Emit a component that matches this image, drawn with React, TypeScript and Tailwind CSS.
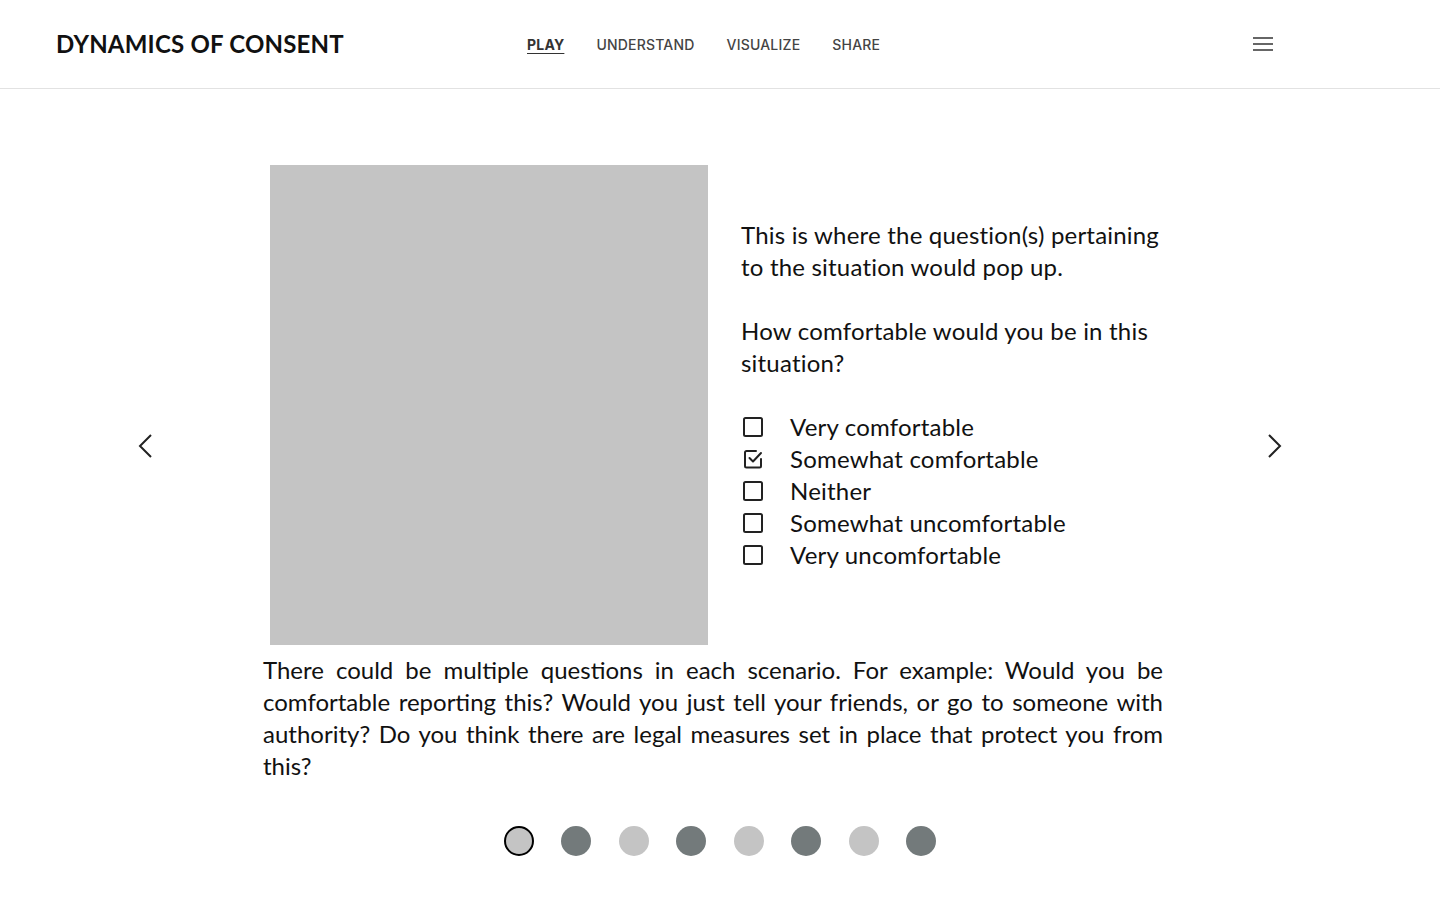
import React from "react";

const Box = ({ checked }: { checked?: boolean }) =>
  checked ? (
    <svg width="24" height="24" viewBox="0 0 24 24" fill="none" stroke="#222" strokeWidth="2" strokeLinecap="round" strokeLinejoin="round">
      <path d="M20 12v7a1.5 1.5 0 0 1-1.5 1.5h-13A1.5 1.5 0 0 1 4 19V5.5A1.5 1.5 0 0 1 5.5 4H15" />
      <path d="M8.5 11l3.5 3.5 8-8.5" />
    </svg>
  ) : (
    <svg width="24" height="24" viewBox="0 0 24 24" fill="none" stroke="#222" strokeWidth="2">
      <rect x="3" y="3" width="18" height="18" rx="1.5" />
    </svg>
  );

export default function App() {
  const options = [
    "Very comfortable",
    "Somewhat comfortable",
    "Neither",
    "Somewhat uncomfortable",
    "Very uncomfortable",
  ];
  const dots = ["a", "d", "l", "d", "l", "d", "l", "d"];
  return (
    <div className="min-h-[900px] bg-white text-[#111]" style={{ fontFamily: "Lato, 'Open Sans', sans-serif" }}>
      <header className="h-[89px] border-b border-[#e2e2e2] flex items-center pl-[56px] pr-[167px]">
        <div className="w-[471px] shrink-0 text-[24px] font-bold tracking-[0.2px] text-[#111]">DYNAMICS OF CONSENT</div>
        <nav className="flex gap-8 text-[14px] text-[#444] font-medium tracking-[0.2px]" style={{ fontFamily: "Inter, sans-serif" }}>
          <a className="font-bold text-[#333] underline underline-offset-[3px]">PLAY</a>
          <a>UNDERSTAND</a>
          <a>VISUALIZE</a>
          <a>SHARE</a>
        </nav>
        <div className="flex-1" />
        <svg width="20" height="16" viewBox="0 0 20 16">
          <rect x="0" y="1" width="20" height="2" fill="#666" />
          <rect x="0" y="7" width="20" height="2" fill="#666" />
          <rect x="0" y="13" width="20" height="2" fill="#666" />
        </svg>
      </header>

      <main className="pt-[76px]">
        <div className="flex">
          <div className="w-[263px] shrink-0 pl-[136px] pt-[268px]">
            <svg width="18" height="26" viewBox="0 0 18 26" fill="none" stroke="#222" strokeWidth="2">
              <path d="M15 2L4 13l11 11" />
            </svg>
          </div>
          <div className="w-[900px] shrink-0">
            <div className="flex">
              <div className="ml-[7px] w-[438px] h-[480px] shrink-0 bg-[#c4c4c4]" />
              <div className="ml-[33px] w-[422px] shrink-0 pt-[54px] text-[24px] leading-[32px] tracking-[0.2px]">
                <p>This is where the question(s) pertaining to the situation would pop up.</p>
                <p className="mt-[32px]">How comfortable would you be in this situation?</p>
                <div className="mt-[32px] flex flex-col">
                  {options.map((o, i) => (
                    <div key={o} className="flex items-center h-[32px]">
                      <div className="w-[24px] h-[24px] mr-[25px]">
                        <Box checked={i === 1} />
                      </div>
                      <span>{o}</span>
                    </div>
                  ))}
                </div>
              </div>
            </div>
            <p className="mt-[9px] text-[24px] leading-[32px] text-justify">
              There could be multiple questions in each scenario. For example: Would you be comfortable reporting this? Would you just tell your friends, or go to someone with authority? Do you think there are legal measures set in place that protect you from this?
            </p>
          </div>
          <div className="flex-1 pl-[103px] pt-[268px]">
            <svg width="18" height="26" viewBox="0 0 18 26" fill="none" stroke="#222" strokeWidth="2">
              <path d="M3 2l11 11L3 24" />
            </svg>
          </div>
        </div>
        <div className="mt-[44px] flex justify-center gap-[27.5px]">
          {dots.map((d, i) =>
            d === "a" ? (
              <div key={i} className="w-[30px] h-[30px] rounded-full bg-[#c4c4c4] border-2 border-black" />
            ) : d === "d" ? (
              <div key={i} className="w-[30px] h-[30px] rounded-full bg-[#737a7b]" />
            ) : (
              <div key={i} className="w-[30px] h-[30px] rounded-full bg-[#c4c4c4]" />
            )
          )}
        </div>
      </main>
    </div>
  );
}
